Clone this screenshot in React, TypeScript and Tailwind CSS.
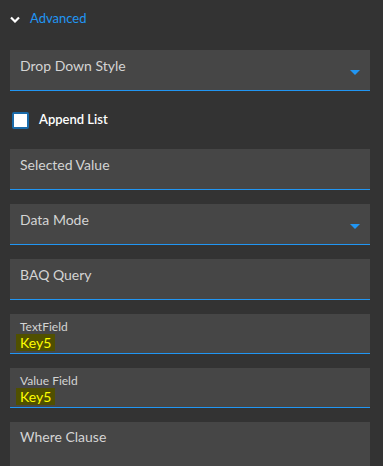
import React from "react";

type FieldProps = {
  label: string;
  dropdown?: boolean;
};

function Field({ label, dropdown }: FieldProps) {
  return (
    <div className="flex h-[41px] items-start justify-between border-b border-[#2196f3] bg-[#464646] pl-[10px] pr-[10px] pt-[6px]">
      <span className="text-[14px] leading-[20px] text-[#d4d4d4]">{label}</span>
      {dropdown && (
        <svg width="10" height="5" viewBox="0 0 10 5" className="mt-[14px]">
          <polygon points="0,0 10,0 5,5" fill="#2196f3" />
        </svg>
      )}
    </div>
  );
}

function ValueField({ label, value }: { label: string; value: string }) {
  return (
    <div className="flex h-[40px] flex-col border-b border-[#2196f3] bg-[#464646] pl-[10px] pr-[10px] pt-[6px]">
      <span className="text-[12px] leading-[14px] text-[#d4d4d4]">{label}</span>
      <span className="text-[14px] leading-[18px]">
        <span className="-ml-[4px] bg-[#505000] px-[4px] text-[#ffff00]">{value}</span>
      </span>
    </div>
  );
}

export default function App() {
  return (
    <div
      className="h-screen w-full overflow-hidden bg-[#333333] pl-[10px] pr-[13px]"
      style={{ fontFamily: "Lato, 'Open Sans', sans-serif" }}
    >
      <div className="flex h-[38px] items-center gap-[10px]">
        <svg width="10" height="7" viewBox="0 0 10 7">
          <polyline points="1,1.5 5,5.5 9,1.5" fill="none" stroke="#ffffff" strokeWidth="2.2" />
        </svg>
        <span className="text-[13px] text-[#2196f3]">Advanced</span>
      </div>

      <div className="mt-[12px] flex flex-col">
        <Field label="Drop Down Style" dropdown />

        <div className="flex h-[58px] items-center gap-[10px] pl-[2px]">
          <div className="h-[17px] w-[17px] rounded-[2px] border-2 border-[#1a6aa8] bg-white" />
          <span className="text-[13px] font-semibold text-white">Append List</span>
        </div>

        <div className="flex flex-col gap-[14px]">
          <Field label="Selected Value" />
          <Field label="Data Mode" dropdown />
          <Field label="BAQ Query" />
          <ValueField label="TextField" value="Key5" />
          <ValueField label="Value Field" value="Key5" />
          <div className="h-[80px] bg-[#464646] pl-[10px] pt-[2px]">
            <span className="text-[14px] leading-[20px] text-[#d4d4d4]">Where Clause</span>
          </div>
        </div>
      </div>
    </div>
  );
}
